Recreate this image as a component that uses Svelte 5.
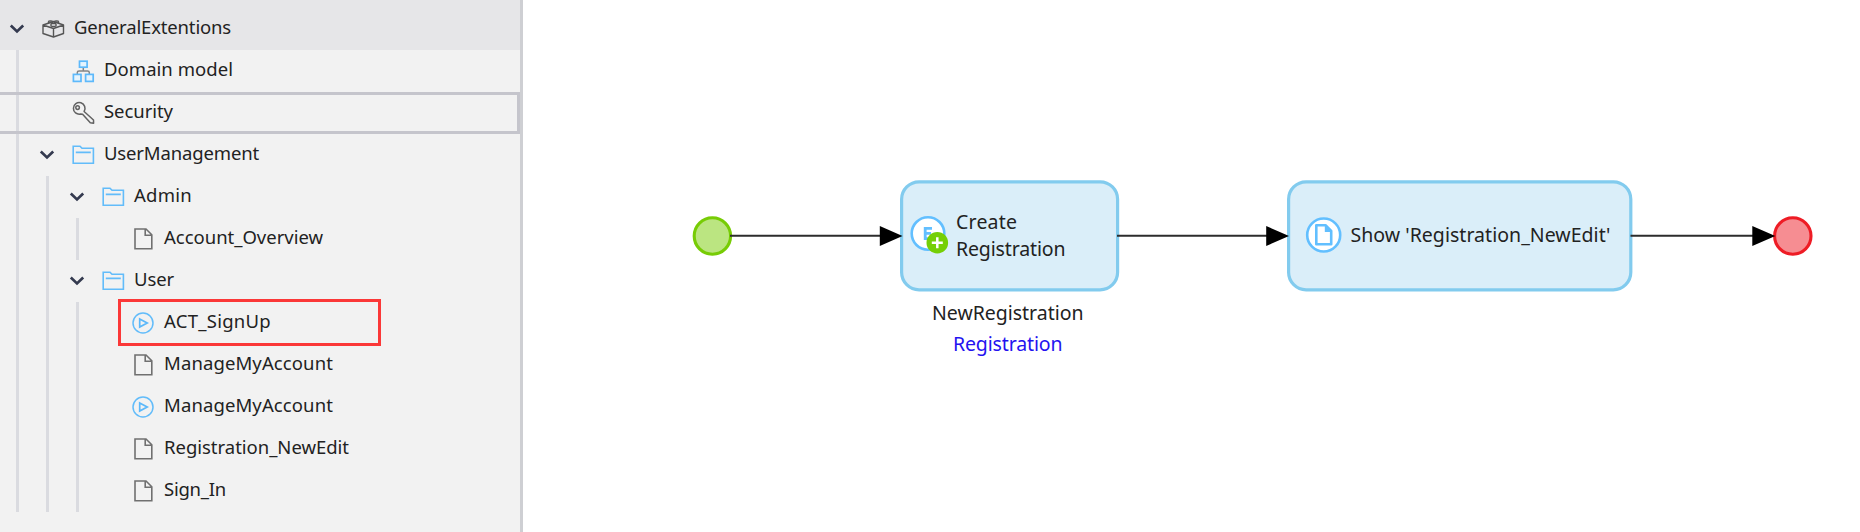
<script>
  const rows = [
    { label: 'GeneralExtentions', level: 0, icon: 'module', open: true, width: 157, guides: [] },
    { label: 'Domain model', level: 1, icon: 'domain', width: 129, guides: [0] },
    { label: 'Security', level: 1, icon: 'key', width: 69, guides: [0], focused: true },
    { label: 'UserManagement', level: 1, icon: 'folder', open: true, width: 155, guides: [0] },
    { label: 'Admin', level: 2, icon: 'folder', open: true, width: 58, guides: [0, 1] },
    { label: 'Account_Overview', level: 3, icon: 'page', width: 159, guides: [0, 1, 2] },
    { label: 'User', level: 2, icon: 'folder', open: true, width: 40, guides: [0, 1] },
    { label: 'ACT_SignUp', level: 3, icon: 'flow', width: 107, guides: [0, 1, 2], marked: true },
    { label: 'ManageMyAccount', level: 3, icon: 'page', width: 169, guides: [0, 1, 2] },
    { label: 'ManageMyAccount', level: 3, icon: 'flow', width: 169, guides: [0, 1, 2] },
    { label: 'Registration_NewEdit', level: 3, icon: 'page', width: 185, guides: [0, 1, 2] },
    { label: 'Sign_In', level: 3, icon: 'page', width: 62, guides: [0, 1, 2] }
  ];

  // Spreads the letters so that a label takes the given width.
  function fit(node, width) {
    const natural = node.getBoundingClientRect().width;
    node.style.letterSpacing = (width - natural) / node.textContent.length + 'px';
  }
</script>

<div class="app">
  <nav class="tree">
    {#each rows as row}
      <div class="row level{row.level}" class:focused={row.focused}>
        {#each row.guides as g}<i class="guide g{g}"></i>{/each}
        <span class="toggle">
          {#if row.open}
            <svg width="16" height="12" viewBox="0 0 16 12"><path d="M1.8 2.6 L8 8.4 L14.2 2.6" fill="none" stroke="#343a4f" stroke-width="2.7" /></svg>
          {/if}
        </span>
        <svg class="icon" width="24" height="24" viewBox="0 0 24 24" fill="none">
          {#if row.icon === 'module'}
            <g stroke="#555" stroke-width="1.4" stroke-linejoin="round">
              <path d="M2 8 L12.5 4.5 L22.5 8 V16.5 L12.5 20 L2 16.5 Z M2 8 L12.5 11.5 L22.5 8 M12.5 11.5 V20" />
              <path d="M7.5 6.8 V4.8 C7.5 3.8 11.5 3.8 11.5 4.8 V6.5 M13.5 6.5 V4.8 C13.5 3.8 17.5 3.8 17.5 4.8 V6.8 M10 8.7 V7.2 C10 6.2 15 6.2 15 7.2 V8.7 C15 9.7 10 9.7 10 8.7" />
            </g>
          {:else if row.icon === 'domain'}
            <path d="M12.3 8 V12 M6.3 15 V13.6 Q6.3 11.9 8 11.9 H16.6 Q18.3 11.9 18.3 13.6 V15" stroke="#858585" stroke-width="1.5" />
            <g stroke="#5db9fb" stroke-width="1.7" fill="#e5f4fe">
              <rect x="8.5" y="2.2" width="7.6" height="6" /><rect x="2.4" y="15.4" width="7.6" height="7" /><rect x="14.6" y="15.4" width="7.6" height="7" />
            </g>
          {:else if row.icon === 'key'}
            <g stroke="#626262" stroke-width="1.5" stroke-linejoin="round">
              <path d="M13.1 10.5 A5.8 5.8 0 1 0 9.6 13 L11.6 13.2 L19.3 21.8 L22.6 22.2 L22.5 19 Z" />
              <circle cx="6.6" cy="6.6" r="1.8" />
            </g>
          {:else if row.icon === 'folder'}
            <path d="M2.2 20.3 V3.2 H9 L11 5.3 H22.4 V20.3 Z M4.8 9.4 H19.8" stroke="#62bcfa" stroke-width="1.6" />
          {:else if row.icon === 'page'}
            <path d="M4 2 H15 L20.8 7.8 V21.8 H4 Z M14.2 2.5 V8.3 H20.3" stroke="#707070" stroke-width="1.6" />
          {:else}
            <circle cx="12" cy="12" r="10" stroke="#62bcfa" stroke-width="1.5" />
            <path d="M8.7 8 L16.2 12 L8.7 16 Z" stroke="#5bb8fa" stroke-width="1.7" />
          {/if}
        </svg>
        <span class="label" use:fit={row.width}>{row.label}</span>
        {#if row.marked}<b class="mark"></b>{/if}
      </div>
    {/each}
  </nav>

  <main class="canvas">
    <svg width="1337" height="532" viewBox="523 0 1337 532">
      <g fill="#daeef9" stroke="#82cbee" stroke-width="3.2">
        <rect x="901.6" y="181.8" width="216" height="108" rx="17.5" />
        <rect x="1288.6" y="181.8" width="342.2" height="108" rx="17.5" />
      </g>
      <circle cx="712.4" cy="236" r="18.2" fill="#bbe581" stroke="#77cc05" stroke-width="3.1" />
      <circle cx="1792.8" cy="236" r="18.2" fill="#f68d92" stroke="#ee1c25" stroke-width="3.1" />
      <path d="M730 235.8 H885 M1117 235.8 H1270 M1630.5 235.8 H1757" stroke="#2c2c2c" stroke-width="1.9" />
      <path d="M879.8 226 L902.5 236 L879.8 246 Z M1266.2 226 L1289 236 L1266.2 246 Z M1752.3 226 L1775.3 236 L1752.3 246 Z" fill="#000" />

      <circle cx="928" cy="233.5" r="16.3" fill="#fff" stroke="#62bfff" stroke-width="2.6" />
      <path d="M932 228.3 H925.2 V238.7 H932 M925 233.3 H931" fill="none" stroke="#62bfff" stroke-width="2.8" />
      <circle cx="937.3" cy="242.7" r="10.8" fill="#75cf06" />
      <path d="M937.3 237.2 V248.2 M931.8 242.7 H942.8" stroke="#fff" stroke-width="2.5" />

      <circle cx="1323.7" cy="235" r="16.5" fill="#fff" stroke="#62bfff" stroke-width="2.6" />
      <path d="M1316.3 225.2 H1325.5 L1331.2 231 V244.2 H1316.3 Z" fill="none" stroke="#62bfff" stroke-width="2.6" stroke-linejoin="round" />
      <path d="M1324.8 225 L1331.8 232 H1324.8 Z" fill="#62bfff" />

      <g class="caption">
        <text x="956" y="228.5" textLength="61">Create</text>
        <text x="956" y="255.5" textLength="109.5">Registration</text>
        <text x="1350.5" y="242" textLength="260">Show 'Registration_NewEdit'</text>
        <text x="932" y="319.5" textLength="151.5">NewRegistration</text>
        <text class="entity" x="953" y="351" textLength="109.5">Registration</text>
      </g>
    </svg>
  </main>
</div>

<style>
  :global(body) { margin: 0; background: #fff; }
  .app { display: flex; width: 1860px; height: 532px; overflow: hidden; font-family: "Noto Sans", "Open Sans", sans-serif; }
  .tree { box-sizing: border-box; width: 523px; height: 532px; flex: none; background: #f2f2f2; border-right: 3px solid #cecfd3; }
  .row { position: relative; display: flex; align-items: center; box-sizing: border-box; height: 42px; }
  .level0 { height: 50px; padding: 8px 0 0 9px; background: #e6e6e8; }
  .level1 { padding-left: 39px; }
  .level2 { padding-left: 69px; }
  .level3 { padding-left: 99px; }
  .focused { box-shadow: inset -3px 0 #c5c5cc, inset 0 3px #c5c5cc, inset 0 -3px #c5c5cc; }
  .toggle { display: flex; width: 16px; height: 12px; flex: none; }
  .icon { flex: none; margin-left: 16px; }
  .label { margin-left: 9px; margin-top: -5px; font-size: 18.5px; line-height: 26px; color: #222; white-space: nowrap; }
  .guide { position: absolute; top: 0; bottom: 0; width: 3px; background: #dadbe0; }
  .focused .guide { top: 3px; bottom: 3px; }
  .g0 { left: 15.5px; }
  .g1 { left: 45.5px; }
  .g2 { left: 75.5px; }
  .mark { position: absolute; box-sizing: border-box; left: 118px; top: -3px; width: 263px; height: 47px; border: 3px solid #fb3838; }
  .canvas { width: 1337px; height: 532px; }
  .canvas svg { display: block; }
  .caption { font-size: 19.5px; fill: #222; }
  .entity { fill: #2412f0; }
</style>
